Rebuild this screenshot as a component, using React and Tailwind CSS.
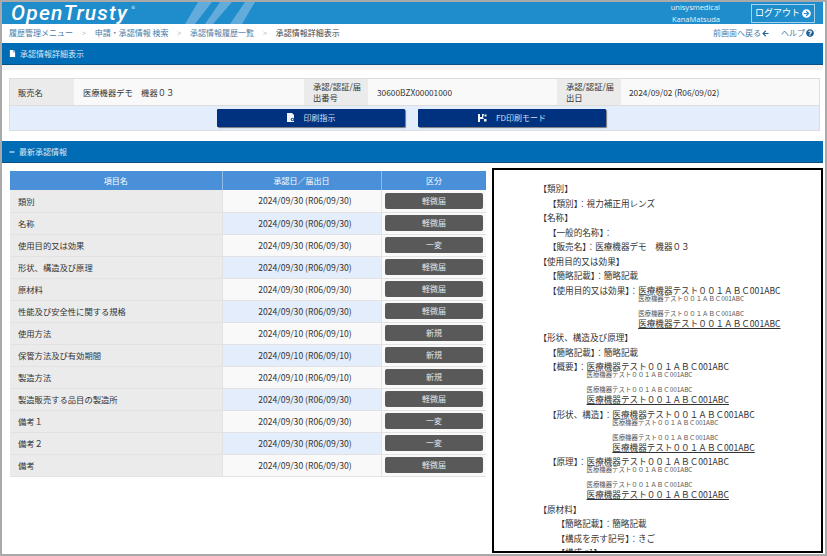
import { FaArrowLeft, FaArrowCircleRight, FaFile, FaMinus, FaQuestionCircle } from "react-icons/fa";

const rows = [
  ["類別", "2024/09/30 (R06/09/30)", "軽微届"],
  ["名称", "2024/09/30 (R06/09/30)", "軽微届"],
  ["使用目的又は効果", "2024/09/30 (R06/09/30)", "一変"],
  ["形状、構造及び原理", "2024/09/30 (R06/09/30)", "軽微届"],
  ["原材料", "2024/09/30 (R06/09/30)", "軽微届"],
  ["性能及び安全性に関する規格", "2024/09/30 (R06/09/30)", "軽微届"],
  ["使用方法", "2024/09/10 (R06/09/10)", "新規"],
  ["保管方法及び有効期間", "2024/09/10 (R06/09/10)", "新規"],
  ["製造方法", "2024/09/10 (R06/09/10)", "新規"],
  ["製造販売する品目の製造所", "2024/09/30 (R06/09/30)", "軽微届"],
  ["備考１", "2024/09/30 (R06/09/30)", "一変"],
  ["備考２", "2024/09/30 (R06/09/30)", "一変"],
  ["備考", "2024/09/30 (R06/09/30)", "軽微届"],
];

const TEST = "医療機器テスト００１ＡＢＣ001ABC";

function Diff({ label }) {
  return (
    <div className="flex pl-[9.5px]">
      <span className="h-[14px] leading-[14px]">{label}：</span>
      <div className="flex flex-col">
        <span className="h-[10px] leading-[14px]">{TEST}</span>
        <span className="h-[10px] text-[6.4px] leading-[12px] text-[#555]">{TEST}</span>
        <span className="h-[15px] pt-[7px] text-[6.4px] leading-[8px] text-[#555]">{TEST}</span>
        <span className="h-[12.5px] leading-[10px] underline">{TEST}</span>
      </div>
    </div>
  );
}

function Line({ indent, children }) {
  const pad = indent === 2 ? "pl-[18px]" : indent === 1 ? "pl-[9.5px]" : "";
  return <div className={`h-[14.5px] leading-[14.5px] ${pad}`}>{children}</div>;
}

function SectionBar({ icon, title }) {
  return (
    <div className="flex h-[22px] items-center gap-[4px] border-b border-[#0d4f80] bg-[#006cb5] pl-[7px] text-[8px] text-[#dbe9f5]">
      {icon}
      <span>{title}</span>
    </div>
  );
}

function PrintButton({ icon, label }) {
  return (
    <button className="flex h-[18px] w-[188px] items-center justify-center gap-[9px] rounded-[1px] bg-[#00327f] text-[8px] text-[#d5dff0] shadow-[1px_1px_1px_#777]">
      {icon}
      <span>{label}</span>
    </button>
  );
}

function PrintIcon() {
  return (
    <svg width="8" height="9" viewBox="0 0 8 9">
      <path d="M0 0H5L7 2V9H0Z" fill="#f2f5fb" />
      <circle cx="5.5" cy="6.5" r="1.8" fill="#2a5aa8" />
      <circle cx="5.5" cy="6.5" r="0.7" fill="#f2f5fb" />
    </svg>
  );
}

function FdIcon() {
  return (
    <svg width="9" height="8" viewBox="0 0 9 8">
      <path d="M0 0H2V3H4V0H6L5 3.5L6 5H2V8H0Z" fill="#f2f5fb" />
      <rect x="6.5" y="0.5" width="2" height="2" fill="#f2f5fb" />
      <rect x="6" y="5" width="2.5" height="2.5" fill="#f2f5fb" />
    </svg>
  );
}

export default function App() {
  return (
    <div className="h-[556px] w-[827px] overflow-hidden border-2 border-[#a9a9a9] bg-white font-['Noto_Sans_CJK_JP','Noto_Sans',sans-serif] text-[8.3px] text-[#333]">
      <div className="w-[821px]">
        {/* header */}
        <div className="relative flex h-[22px] items-center justify-between bg-[#1f8dcb] pr-[8px] pl-[9px]">
          <svg className="absolute top-0 left-[178px]" width="80" height="22">
            <path d="M5 22L18 0H32L15 22ZM25 22L40 0H52L33 22ZM50 22L65 0H75L62 22Z" fill="#62abda" />
          </svg>
          <div className="flex items-start text-white">
            <span className="font-['Roboto',sans-serif] text-[21px] leading-[21px] font-medium tracking-[1.2px] italic">OpenTrusty</span>
            <span className="mt-[1px] ml-[3px] text-[8px] leading-[10px] text-[#cde3f2]">®</span>
          </div>
          <div className="relative flex items-center gap-[31px]">
            <div className="text-right font-['Open_Sans',sans-serif] text-[7.5px] leading-[12px] text-[#e8f3fa]">
              <div>unisysmedical</div>
              <div>KanaMatsuda</div>
            </div>
            <div className="flex h-[19px] w-[64px] items-center justify-center gap-[2px] border border-[#a5d2ec] text-[9px] text-white">
              ログアウト
              <FaArrowCircleRight className="text-[9px]" />
            </div>
          </div>
        </div>

        {/* breadcrumb */}
        <div className="flex h-[19px] items-center justify-between pr-[9px] pb-[1px] pl-[7px] text-[8px] text-[#4c7ba6]">
          <div className="flex items-center gap-[8.6px]">
            <span>履歴管理メニュー</span>
            <span className="text-[#bbb]">&gt;</span>
            <span>申請・承認情報 検索</span>
            <span className="text-[#bbb]">&gt;</span>
            <span>承認情報履歴一覧</span>
            <span className="text-[#bbb]">&gt;</span>
            <span className="text-[#444]">承認情報詳細表示</span>
          </div>
          <div className="flex items-center gap-[12px]">
            <span className="flex items-center gap-[1px]">
              前画面へ戻る
              <FaArrowLeft className="text-[7px] text-[#1d5f96]" />
            </span>
            <span className="flex items-center gap-[1px]">
              ヘルプ
              <FaQuestionCircle className="text-[8px] text-[#1d5f96]" />
            </span>
          </div>
        </div>

        <SectionBar icon={<FaFile className="text-[7px] text-white" />} title="承認情報詳細表示" />
        <div className="h-[5px] bg-[#f3f3f3]" />

        {/* summary panel */}
        <div className="mt-[8px] ml-[7px] w-[811px] border border-[#dddddd]">
          <div className="grid h-[27px] grid-cols-[64px_230px_64px_189px_1fr] border-b border-[#dddddd] bg-[#f9f9f9] leading-[11px]">
            <div className="flex items-center bg-[#ebebeb] pl-[8px]">販売名</div>
            <div className="flex items-center pl-[9px]">医療機器デモ　機器０３</div>
            <div className="flex items-center bg-[#ebebeb] pl-[9px]">
              <span>承認/認証/届<br />出番号</span>
            </div>
            <div className="flex items-center pl-[9px]">30600BZX00001000</div>
            <div className="flex">
              <div className="flex w-[64px] items-center bg-[#ebebeb] pl-[9px]">
                <span>承認/認証/届<br />出日</span>
              </div>
              <div className="flex items-center pl-[8px]">2024/09/02 (R06/09/02)</div>
            </div>
          </div>
          <div className="flex h-[24px] items-center justify-center gap-[13px] bg-[#e4edfb] pr-[6px] pb-[1px]">
            <PrintButton icon={<PrintIcon />} label="印刷指示" />
            <PrintButton icon={<FdIcon />} label="FD印刷モード" />
          </div>
        </div>

        <div className="mt-[10px]">
          <SectionBar icon={<FaMinus className="text-[6px] text-white" />} title="最新承認情報" />
        </div>

        {/* body */}
        <div className="flex items-start">
          <table className="mt-[8px] ml-[8px] w-[477px] table-fixed border-collapse">
            <thead>
              <tr className="h-[19px] bg-[#4a90d9] text-[8px] font-normal text-white">
                <th className="w-[212px] border-r border-[#8dbce8] font-normal">項目名</th>
                <th className="w-[159px] border-r border-[#8dbce8] font-normal">承認日／届出日</th>
                <th className="font-normal">区分</th>
              </tr>
            </thead>
            <tbody>
              {rows.map((row, i) => (
                <tr key={i} className="h-[22px] border-b border-[#e2e2e2]">
                  <td className="bg-[#ebebeb] pl-[8px]">{row[0]}</td>
                  <td className={`border-x border-[#e2e2e2] pl-[7px] text-center text-[8.6px] ${i % 2 === 1 ? "bg-[#e4edfb]" : "bg-[#f9f9f9]"}`}>
                    {row[1]}
                  </td>
                  <td className="bg-[#f9f9f9] px-[3px]">
                    <div className="flex h-[16px] items-center justify-center rounded-[2px] bg-[#595959] text-[8px] text-[#e6e6e6]">
                      {row[2]}
                    </div>
                  </td>
                </tr>
              ))}
            </tbody>
          </table>

          {/* document preview */}
          <div className="mt-[5px] ml-[6px] h-[385px] w-[331px] overflow-hidden border-2 border-black bg-white pt-[11px] pl-[44px] text-[8.6px] text-[#333]">
            <Line>【類別】</Line>
            <Line indent={1}>【類別】：視力補正用レンズ</Line>
            <Line>【名称】</Line>
            <Line indent={1}>【一般的名称】：</Line>
            <Line indent={1}>【販売名】：医療機器デモ　機器０３</Line>
            <Line>【使用目的又は効果】</Line>
            <Line indent={1}>【簡略記載】：簡略記載</Line>
            <Diff label="【使用目的又は効果】" />
            <Line>【形状、構造及び原理】</Line>
            <Line indent={1}>【簡略記載】：簡略記載</Line>
            <Diff label="【概要】" />
            <Diff label="【形状、構造】" />
            <Diff label="【原理】" />
            <Line>【原材料】</Line>
            <Line indent={2}>【簡略記載】：簡略記載</Line>
            <Line indent={2}>【構成を示す記号】：きご</Line>
            <Line indent={2}>【構成 #1】</Line>
          </div>
        </div>
      </div>
    </div>
  );
}
